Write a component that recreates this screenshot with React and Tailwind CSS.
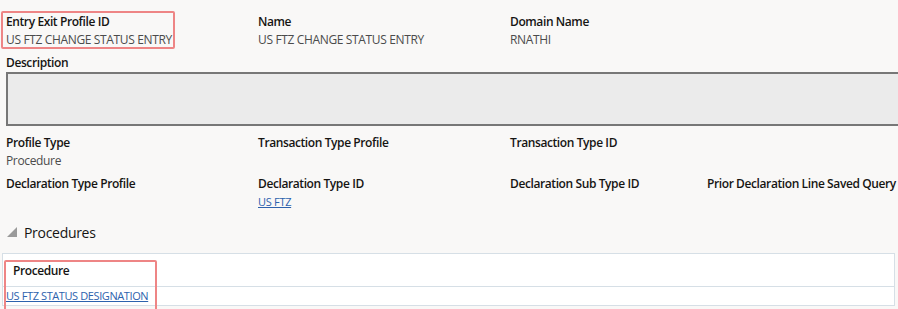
import React from "react";

const font = { fontFamily: '"Open Sans", "Noto Sans", sans-serif' };

function Field({ label, value, link }) {
  return (
    <div className="flex flex-col">
      <div className="text-[12px] leading-[18px] font-semibold text-[#161513] whitespace-nowrap tracking-[-0.4px]">{label}</div>
      {value ? (
        link ? (
          <a className="text-[11px] leading-[18px] text-[#2d62ad] underline whitespace-nowrap tracking-[-0.3px]">{value}</a>
        ) : (
          <div className="text-[12px] leading-[18px] text-[#4b4b4b] whitespace-nowrap tracking-[-0.35px]">{value}</div>
        )
      ) : (
        <div className="h-[18px]" />
      )}
    </div>
  );
}

export default function App() {
  return (
    <div className="w-[898px] h-[309px] bg-[#f9f8f7] overflow-hidden" style={font}>
      <div className="pl-[6px] pt-[13px]">
        <div className="grid grid-cols-[252px_252px_197px_1fr]">
          <div className="relative">
            <Field label="Entry Exit Profile ID" value="US FTZ CHANGE STATUS ENTRY" />
            <div className="absolute left-[-5px] top-[-2px] w-[174px] h-[38px] border-2 border-[#ee8585] rounded-[2px]" />
          </div>
          <Field label="Name" value="US FTZ CHANGE STATUS ENTRY" />
          <Field label="Domain Name" value="RNATHI" />
          <div />
        </div>
        <div className="mt-[5px] text-[12px] leading-[18px] font-semibold text-[#161513] tracking-[-0.4px]">Description</div>
        <div className="w-[900px] h-[54px] bg-[#ebebeb] border-2 border-[#777777]" />
        <div className="mt-[8px] grid grid-cols-[252px_252px_197px_1fr]">
          <Field label="Profile Type" value="Procedure" />
          <Field label="Transaction Type Profile" />
          <Field label="Transaction Type ID" />
          <div />
        </div>
        <div className="mt-[5px] grid grid-cols-[252px_252px_197px_1fr]">
          <Field label="Declaration Type Profile" />
          <Field label="Declaration Type ID" value="US FTZ" link />
          <Field label="Declaration Sub Type ID" />
          <Field label="Prior Declaration Line Saved Query" />
        </div>
      </div>
      <div className="mt-[11px] flex items-center h-[20px] pl-[7px]">
        <svg width="10" height="10" viewBox="0 0 10 10" className="mr-[7px]">
          <polygon points="10,0 10,10 0,10" fill="#9a9a9a" />
        </svg>
        <span className="text-[14px] text-[#161513] tracking-[-0.3px]">Procedures</span>
      </div>
      <div className="relative mt-[11px] ml-[2px] w-[893px] bg-white border border-[#d6dfe6]">
        <div className="h-[33px] border-b border-[#d6dfe6] flex items-center pl-[10px] pt-[1px]">
          <span className="text-[12px] font-semibold text-[#161513] tracking-[-0.4px]">Procedure</span>
        </div>
        <div className="h-[18px] flex items-center pl-[3px]">
          <a className="text-[11px] text-[#2d62ad] underline whitespace-nowrap tracking-[-0.4px]">US FTZ STATUS DESIGNATION</a>
        </div>
        <div className="absolute left-[1px] top-[6px] w-[153px] h-[60px] border-2 border-[#ee8585] rounded-[2px]" />
      </div>
    </div>
  );
}
